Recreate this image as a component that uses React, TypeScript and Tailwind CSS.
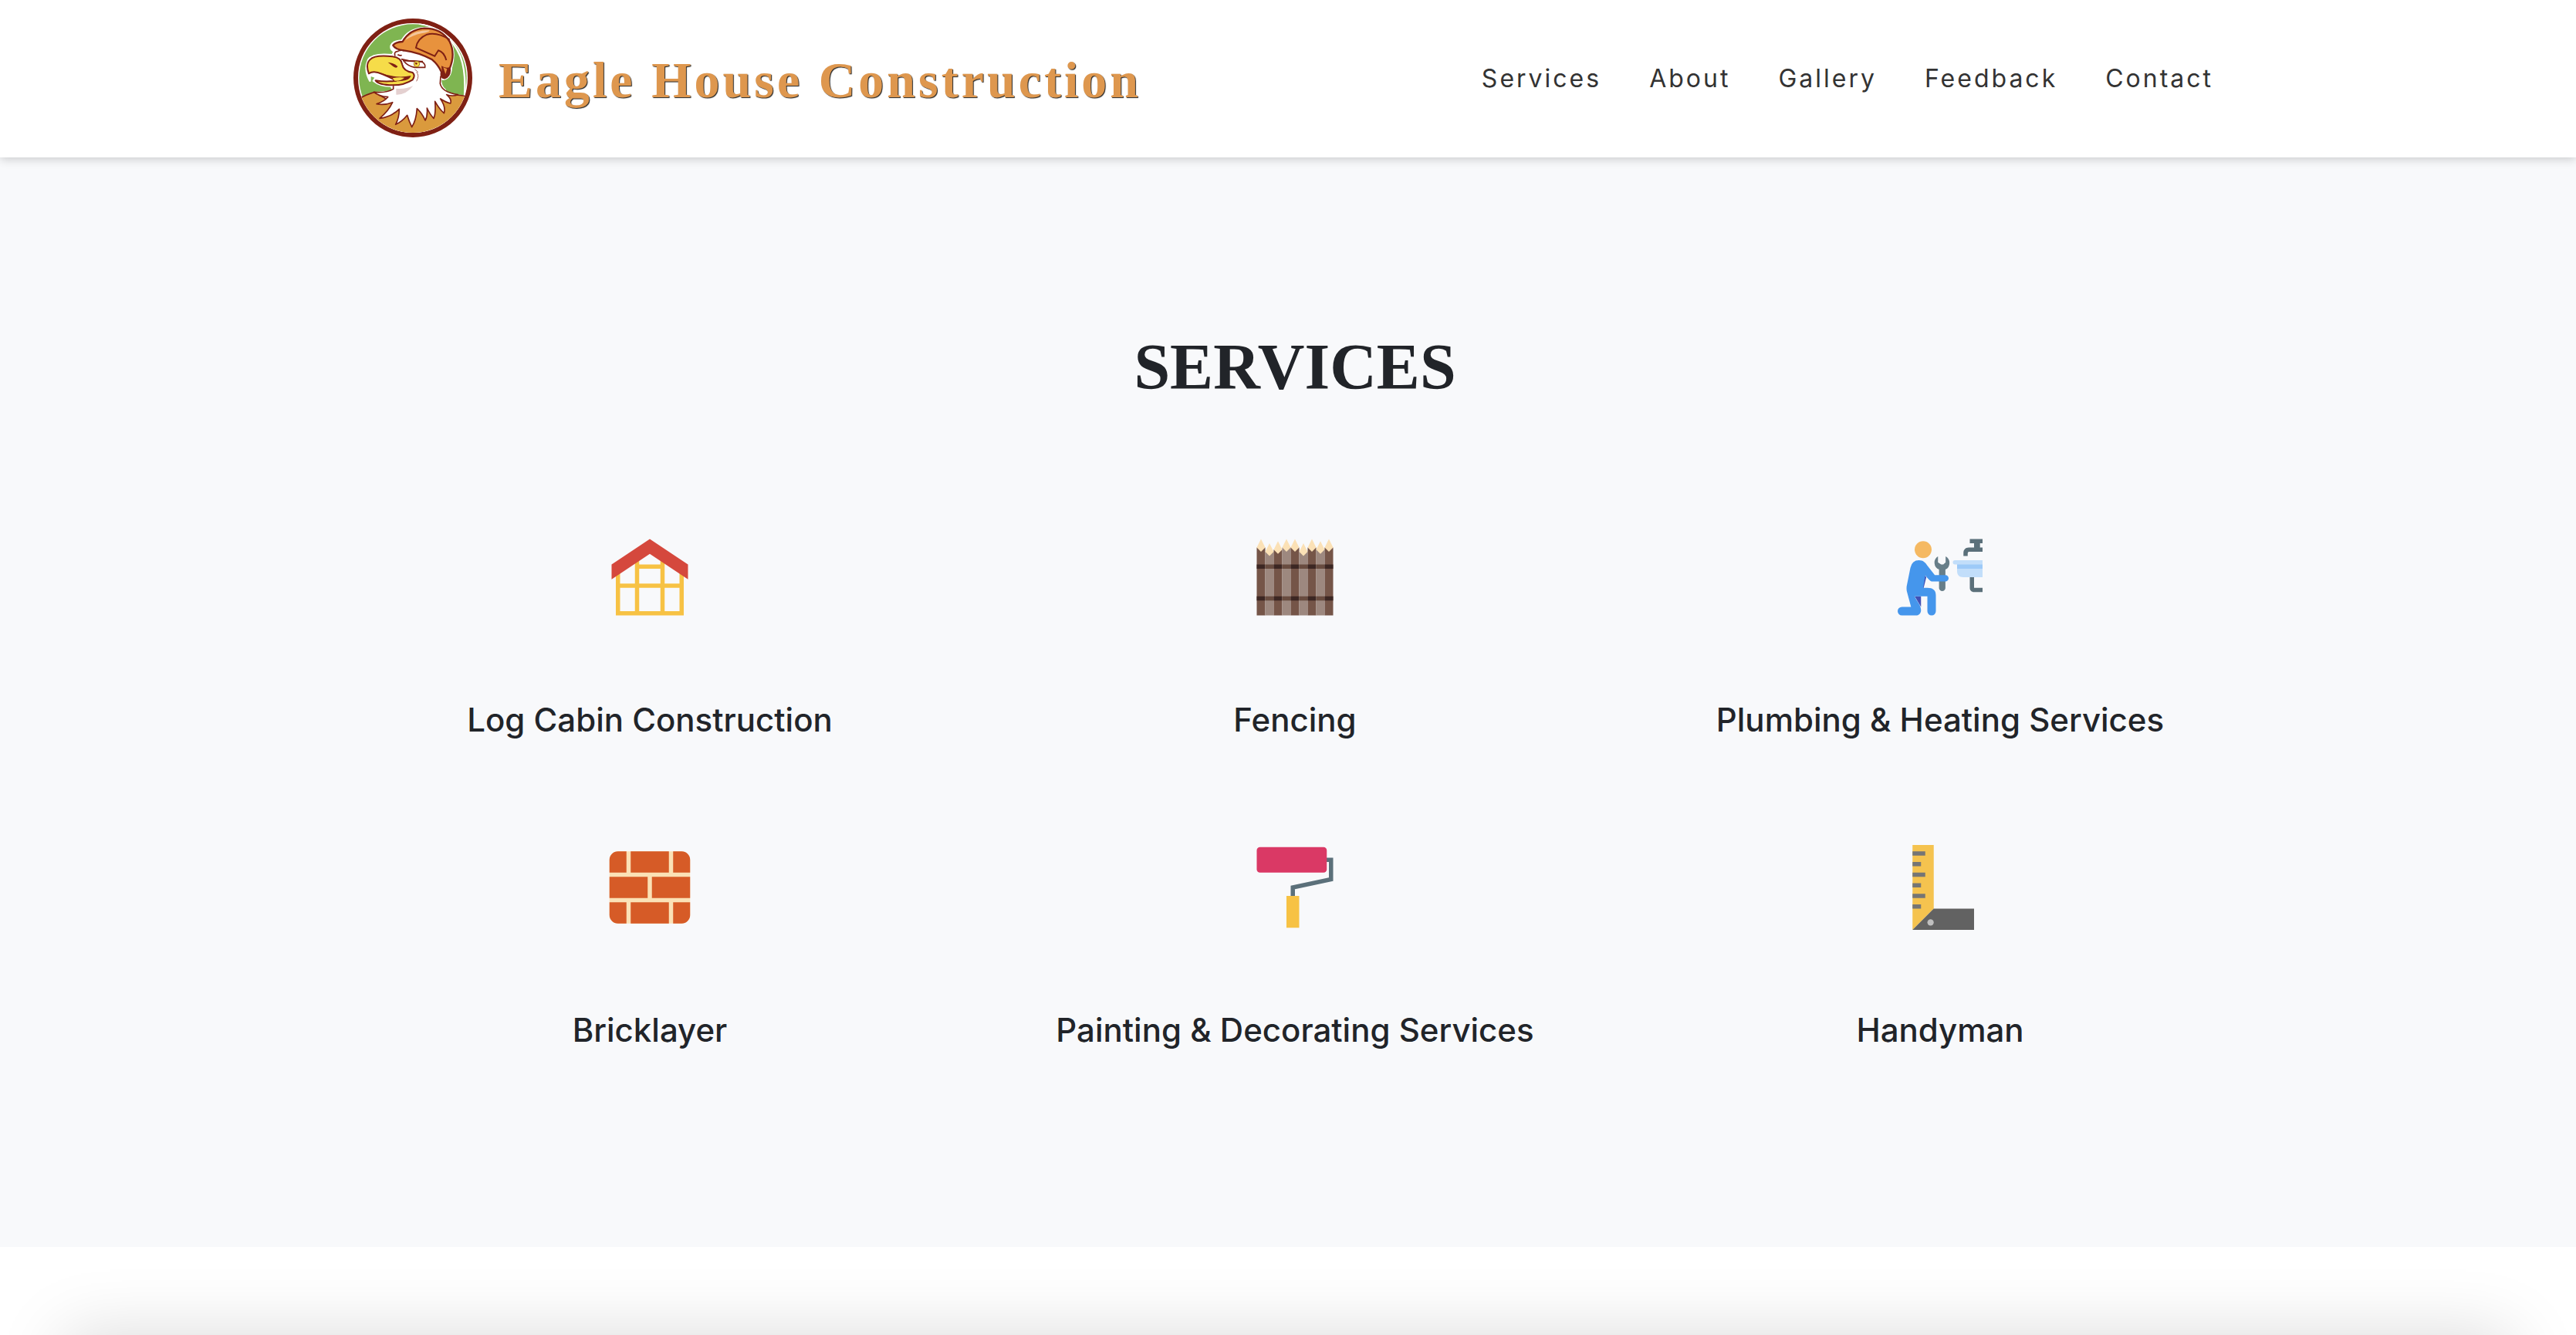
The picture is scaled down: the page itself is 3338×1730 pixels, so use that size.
import type { ReactNode } from "react";

function EagleLogo() {
  return (
    <svg viewBox="0 6 570 540" className="h-[180px] w-[190px]" role="img" aria-label="Eagle House Construction logo">
      <defs>
        <clipPath id="disc"><circle cx="285" cy="273" r="213" /></clipPath>
      </defs>
      <circle cx="285" cy="273" r="222" fill="#fff" stroke="#7f2014" strokeWidth="18" />
      <g clipPath="url(#disc)">
        <circle cx="285" cy="273" r="209" fill="#7fb551" />
        <path d="M60 350 L88 348 L130 328 L206 322 L390 312 L440 335 L482 340 L510 345 V500 H60Z" fill="#fff" />
        <path d="M60 362 Q95 340 135 328 L260 400 L420 335 L482 342 L510 350 L500 500 H60Z" fill="#da9a3d" stroke="#7f2014" strokeWidth="5" />
        <path d="M310 62 Q420 75 470 190 Q492 250 486 340" fill="none" stroke="#fff" strokeWidth="7" />
      </g>
      <path d="M201 146 Q207 130 242 128 Q270 78 340 78 Q402 82 430 130 Q452 180 434 232 Q432 272 404 278 L392 276 Q392 306 410 320 L380 330 L220 340 L208 318 L200 304 Q160 306 132 284 L142 270 L118 262 L118 284 Q94 240 112 202 Q130 176 206 184 L212 170 Q196 160 201 146Z" fill="#fff" stroke="#fff" strokeWidth="8" strokeLinejoin="round" />
      <path d="M209 304 L209 316 Q184 332 134 328 Q152 344 188 347 Q174 364 144 374 Q174 380 206 368 Q190 402 156 430 Q202 424 232 394 Q232 428 218 454 Q242 444 263 418 Q270 442 281 464 Q298 438 301 392 Q322 412 333 438 Q343 420 340 390 Q352 416 366 430 Q375 410 371 364 Q388 394 406 410 Q414 386 392 354 Q414 368 431 372 Q438 356 416 338 Q440 346 460 338 Q398 328 391 295 L393 266 L320 190 L220 170Z" fill="#fff" />
      <path d="M209 304 L209 316 Q184 332 134 328 Q152 344 188 347 Q174 364 144 374 Q174 380 206 368 Q190 402 156 430 Q202 424 232 394 Q232 428 218 454 Q242 444 263 418 Q270 442 281 464 Q298 438 301 392 Q322 412 333 438 Q343 420 340 390 Q352 416 366 430 Q375 410 371 364 Q388 394 406 410 Q414 386 392 354 Q414 368 431 372 Q438 356 416 338 Q440 346 460 338 Q398 328 391 295 L393 266" fill="none" stroke="#7f2014" strokeWidth="5" strokeLinejoin="round" />
      <path d="M220 314 Q255 318 286 304 Q258 340 220 338Z" fill="#e4d0d0" />
      <path d="M208 146 Q216 134 245 132 Q272 84 330 80 Q396 80 427 130 Q452 180 428 236 Q432 266 408 274 Q392 274 396 250 Q384 222 360 202 Q310 174 250 166 Q216 162 208 146Z" fill="#e8923d" stroke="#7f2014" strokeWidth="7" strokeLinejoin="round" />
      <path d="M262 116 Q290 88 350 88 Q350 96 318 100 Q286 106 256 126Z" fill="#f3c69c" />
      <path d="M428 124 Q380 94 340 104 Q302 120 297 156 L370 188 L384 166 Q406 172 415 204" fill="none" stroke="#7f2014" strokeWidth="6" />
      <path d="M396 226 Q414 238 430 230 Q430 268 410 274 Q394 272 398 248Z" fill="#7f2014" />
      <path d="M403 232 L418 238 L412 258Z" fill="#e8923d" />
      <path d="M216 188 Q210 172 224 170 Q242 162 252 168 M226 182 Q236 188 242 184 M246 206 Q300 206 322 211 Q335 220 332 232 L292 232 Q266 228 250 208" fill="none" stroke="#7f2014" strokeWidth="5" />
      <path d="M240 200 Q280 212 324 209" fill="none" stroke="#7f2014" strokeWidth="6" />
      <circle cx="300" cy="219" r="11" fill="#f6dc49" stroke="#a57a1a" strokeWidth="3" />
      <circle cx="298" cy="217" r="4" fill="#7f2014" />
      <path d="M114 256 Q100 220 118 202 Q138 182 206 190 Q240 194 244 222 Q248 246 284 252 Q296 264 284 280 Q250 302 206 301 Q152 300 140 283 Q180 290 220 284 Q200 272 166 258 Q132 242 114 256Z" fill="#f6dc49" stroke="#7f2014" strokeWidth="6" strokeLinejoin="round" />
      <path d="M162 254 Q222 276 278 264 Q272 282 244 284 Q190 290 214 276 Q190 268 162 254Z" fill="#7f2014" />
      <path d="M206 274 Q232 268 252 272 Q238 286 214 284Z" fill="#f6dc49" />
      <path d="M188 212 Q210 214 226 228 Q222 238 208 228" fill="#7f2014" />
      <path d="M299 250 Q312 264 299 286 M292 240 Q302 244 305 252" fill="none" stroke="#7f2014" strokeWidth="2" />
    </svg>
  );
}

function Icon({ children }: { children: ReactNode }) {
  return <svg viewBox="0 0 48 48" className="size-[132px]" aria-hidden="true">{children}</svg>;
}

const cabin = (
  <Icon>
    <path d="M9 22V41H39V22M18 16V41M30 16V41M9 28H39M18 19H30" fill="none" stroke="#f7c244" strokeWidth="2" />
    <path d="M24 6 6 18v7L24 13l18 12v-7z" fill="#d5483d" />
  </Icon>
);

const posts = [0, 2, 1, 0, 0, 2, 0, 1, 0];
const fence = (
  <Icon>
    {posts.map((drop, i) => (
      <g key={i}>
        <path d={`M${6 + i * 4} ${10 + drop}h4V42h-4z`} fill={i % 2 ? "#9d887f" : "#755548"} />
        <path d={`M${6 + i * 4} ${10 + drop}l2 -4 2 4 -2 2z`} fill="#fbe1b6" />
        <path d={`M${6 + i * 4} 18h4v2h-4zM${6 + i * 4} 33h4v2h-4z`} fill={i % 2 ? "#694c40" : "#3c2723"} />
      </g>
    ))}
  </Icon>
);

const plumber = (
  <Icon>
    <circle cx="16" cy="11" r="4" fill="#f5b962" />
    <path d="M15 21 17.500 24 16 30zM12 33h3v5z" fill="#4150b5" />
    <path d="M23 14.200V17l1.500 1h1L26.600 17v-2.800a3.500 3.500 0 0 1-.1 6.200V29a1.500 1.500 0 0 1-3 0v-8.600a3.500 3.500 0 0 1-.5-6.200z" fill="#677e89" />
    <path d="M14 16c2 0 3 1 4 2.500L21.500 23H26.500a1.500 1.500 0 0 1 0 3H20.500C19 26 18 24 15.500 21.500L17 23 16 29h2c3 0 4 1.500 4 3.500V40a2 2 0 0 1-4 0V33h-6c1 2.500 3 4 3 6.500 0 1.500-1 2.500-2.500 2.500H6a2 2 0 0 1 0-4h4.300L8.300 30.500Q8 29 8.500 27L10 19.500Q10.800 16 14 16z" fill="#4596ec" />
    <path d="M38 6h6v2h-1.200v2H44v2h-6c-.8 0-1 .2-1 1v1h-2v-1.500C35 11 36 10 37.500 10H40V8h-2z" fill="#5b707a" />
    <path d="M31 16h13v8H35c-2 0-3-1-3-3v-3h-1a1 1 0 0 1 0-2z" fill="#c2defa" />
    <path d="M32 18h12v2H32z" fill="#9dcaf8" />
    <path d="M38 24h2v5h4v2h-4c-1.200 0-2-.8-2-2z" fill="#5b707a" />
  </Icon>
);

const bricks = (
  <Icon>
    <rect x="5" y="7" width="38" height="34" rx="4" fill="#fbe1b6" />
    <path d="M9 7h4v10H5v-6a4 4 0 0 1 4-4zM15 7h18v10H15zM35 7h4a4 4 0 0 1 4 4v6h-8zM5 19h18v10H5zM25 19h18v10H25zM5 31h8v10H9a4 4 0 0 1-4-4zM15 31h18v10H15zM35 31h8v6a4 4 0 0 1-4 4h-4z" fill="#d65b27" />
  </Icon>
);

const roller = (
  <Icon>
    <path d="M38 11h3v9.200L23 24v5" fill="none" stroke="#5b707a" strokeWidth="2" />
    <rect x="6" y="5" width="33" height="12" rx="1.500" fill="#da3965" />
    <path d="M20 28h6v15h-6z" fill="#f7c244" />
  </Icon>
);

const square = (
  <Icon>
    <path d="M11 4h10v30L11 44z" fill="#f5c34f" />
    <path d="M21 34h19v10H11z" fill="#626262" />
    <path d="M11 7h6v2h-6zM11 12h4v2h-4zM11 17h6v2h-6zM11 22h4v2h-4zM11 27h6v2h-6zM11 32h4v2h-4z" fill="#757575" />
    <circle cx="19.500" cy="40.500" r="1.500" fill="#bfbfbf" />
  </Icon>
);

const services = [
  { name: "Log Cabin Construction", icon: cabin },
  { name: "Fencing", icon: fence },
  { name: "Plumbing & Heating Services", icon: plumber },
  { name: "Bricklayer", icon: bricks },
  { name: "Painting & Decorating Services", icon: roller },
  { name: "Handyman", icon: square },
];

const links = ["Services", "About", "Gallery", "Feedback", "Contact"];

export default function App() {
  return (
    <div className="flex min-h-screen flex-col bg-white font-['Inter',sans-serif] text-[#212429]">
      <header className="relative z-10 bg-white shadow-[0_2px_12px_rgba(0,0,0,0.2)]">
        <div className="mx-auto flex h-[204px] max-w-[2458px] items-center justify-between pr-[30px]">
          <a href="#home" className="flex items-center gap-[16px]">
            <EagleLogo />
            <span className="pt-[4px] font-['Liberation_Serif',serif] text-[66px] leading-[80px] font-bold tracking-[4px] whitespace-nowrap text-[#de974e] [text-shadow:1px_1px_1px_#222]">
              Eagle House Construction
            </span>
          </a>
          <nav className="flex gap-[62px] text-[32px] leading-[48px] tracking-[3px] text-[#333]">
            {links.map((l) => (
              <a key={l} href={`#${l.toLowerCase()}`}>{l}</a>
            ))}
          </nav>
        </div>
      </header>
      <main className="flex grow flex-col">
        <section id="services" className="bg-[#f8f9fb] pt-[212px] pb-[254px] pl-[18px]">
          <h2 className="text-center font-['Liberation_Serif',serif] text-[84px] leading-[120px] font-bold">SERVICES</h2>
          <ul className="mx-auto mt-[146px] grid max-w-[2508px] grid-cols-3 gap-y-[124px]">
            {services.map((s) => (
              <li key={s.name} className="flex flex-col items-center gap-[92px]">
                {s.icon}
                <h3 className="text-[42px] leading-[54px] font-medium whitespace-nowrap">{s.name}</h3>
              </li>
            ))}
          </ul>
        </section>
        <section id="about" className="grow overflow-hidden px-[84px] pt-[114px]">
          <div className="-mb-[400px] h-[400px] bg-white shadow-[0_0_84px_rgba(0,0,0,0.15)]" />
        </section>
      </main>
    </div>
  );
}
